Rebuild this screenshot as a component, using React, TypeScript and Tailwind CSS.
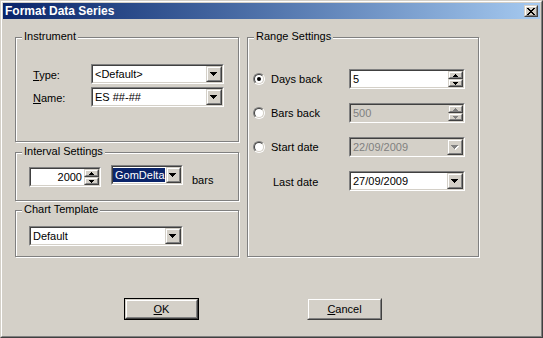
import React from "react";

const Arrow = ({ disabled }: { disabled?: boolean }) => (
  <svg width="8" height="5" viewBox="0 0 8 5" shapeRendering="crispEdges">
    {disabled && (
      <g fill="#ffffff">
        <rect x="1" y="1" width="7" height="1" />
        <rect x="2" y="2" width="5" height="1" />
        <rect x="3" y="3" width="3" height="1" />
        <rect x="4" y="4" width="1" height="1" />
      </g>
    )}
    <g fill={disabled ? "#808080" : "#000000"}>
      <rect x="0" y="0" width="7" height="1" />
      <rect x="1" y="1" width="5" height="1" />
      <rect x="2" y="2" width="3" height="1" />
      <rect x="3" y="3" width="1" height="1" />
    </g>
  </svg>
);

const SmallArrow = ({ up, disabled }: { up?: boolean; disabled?: boolean }) => (
  <svg width="5" height="3" viewBox="0 0 5 3" shapeRendering="crispEdges">
    <g fill={disabled ? "#808080" : "#000000"} transform={up ? "" : "translate(0,3) scale(1,-1)"}>
      <rect x="2" y="0" width="1" height="1" />
      <rect x="1" y="1" width="3" height="1" />
      <rect x="0" y="2" width="5" height="1" />
    </g>
  </svg>
);

const Sunken = ({ className, bg, children }: { className: string; bg: string; children?: React.ReactNode }) => (
  <div className={`border border-t-[#808080] border-l-[#808080] border-r-white border-b-white ${className}`}>
    <div className={`h-full w-full border border-t-[#404040] border-l-[#404040] border-r-[#d4d0c8] border-b-[#d4d0c8] flex items-stretch ${bg}`}>
      {children}
    </div>
  </div>
);

const Raised = ({ className, children }: { className: string; children?: React.ReactNode }) => (
  <div className={`border border-t-[#d4d0c8] border-l-[#d4d0c8] border-r-[#404040] border-b-[#404040] ${className}`}>
    <div className="h-full w-full border border-t-white border-l-white border-r-[#808080] border-b-[#808080] bg-[#d4d0c8] flex items-center justify-center">
      {children}
    </div>
  </div>
);

const Combo = ({
  width,
  text,
  disabled,
  highlight,
}: {
  width: string;
  text: string;
  disabled?: boolean;
  highlight?: boolean;
}) => (
  <Sunken className={`${width} h-[20px]`} bg={disabled ? "bg-[#d4d0c8]" : "bg-white"}>
    {highlight ? (
      <div className="flex-1 py-px pr-px">
        <div className="h-full bg-[#0a246a] text-white pl-[2px] flex items-center leading-[13px]">{text}</div>
      </div>
    ) : (
      <div className={`flex-1 pl-[2px] flex items-center leading-[13px] ${disabled ? "text-[#808080]" : "text-black"}`}>
        {text}
      </div>
    )}
    <Raised className="w-[16px] h-full">
      <Arrow disabled={disabled} />
    </Raised>
  </Sunken>
);

const Spin = ({
  width,
  text,
  disabled,
  right,
}: {
  width: string;
  text: string;
  disabled?: boolean;
  right?: boolean;
}) => (
  <Sunken className={`${width} h-[20px]`} bg={disabled ? "bg-[#d4d0c8]" : "bg-white"}>
    <div
      className={`flex-1 flex items-center leading-[13px] ${right ? "justify-end pr-[2px]" : "pl-[2px]"} ${
        disabled ? "text-[#808080]" : "text-black"
      }`}
    >
      {text}
    </div>
    <div className="w-[15px] h-full flex flex-col">
      <Raised className="w-full h-[8px]">
        <SmallArrow up disabled={disabled} />
      </Raised>
      <Raised className="w-full h-[8px]">
        <SmallArrow disabled={disabled} />
      </Raised>
    </div>
  </Sunken>
);

const Radio = ({ checked }: { checked?: boolean }) => (
  <div className="w-[12px] h-[12px] rounded-full border border-t-[#808080] border-l-[#808080] border-r-white border-b-white">
    <div className="w-full h-full rounded-full border border-t-[#404040] border-l-[#404040] border-r-[#d4d0c8] border-b-[#d4d0c8] bg-white flex items-center justify-center">
      {checked && <div className="w-[4px] h-[4px] rounded-full bg-black" />}
    </div>
  </div>
);

const Group = ({
  className,
  label,
  children,
}: {
  className: string;
  label: string;
  children?: React.ReactNode;
}) => (
  <div
    className={`relative border border-[#808080] shadow-[inset_1px_1px_0_#ffffff,1px_1px_0_#ffffff] ${className}`}
  >
    <div className="absolute left-[6px] top-[-8px] px-[2px] bg-[#d4d0c8] leading-[13px]">{label}</div>
    {children}
  </div>
);

export default function App() {
  return (
    <div className="w-[543px] h-[338px] bg-[#d4d0c8] font-['Liberation_Sans',Arial,sans-serif] text-[11px] text-black border border-t-[#d4d0c8] border-l-[#d4d0c8] border-r-[#404040] border-b-[#404040]">
      <div className="w-full h-full border border-t-white border-l-white border-r-[#808080] border-b-[#808080] p-px flex flex-col">
        {/* Title bar */}
        <div className="h-[16px] flex items-center bg-gradient-to-r from-[#0a246a] to-[#a6caf0] pl-[2px] pr-[2px]">
          <span className="text-white font-bold text-[12px] leading-[14px]">Format Data Series</span>
          <Raised className="ml-auto w-[14px] h-[12px]">
            <svg width="8" height="7" viewBox="0 0 8 7" shapeRendering="crispEdges">
              <g fill="#000">
                <rect x="0" y="0" width="2" height="1" />
                <rect x="6" y="0" width="2" height="1" />
                <rect x="1" y="1" width="2" height="1" />
                <rect x="5" y="1" width="2" height="1" />
                <rect x="2" y="2" width="4" height="1" />
                <rect x="3" y="3" width="2" height="1" />
                <rect x="2" y="4" width="4" height="1" />
                <rect x="1" y="5" width="2" height="1" />
                <rect x="5" y="5" width="2" height="1" />
                <rect x="0" y="6" width="2" height="1" />
                <rect x="6" y="6" width="2" height="1" />
              </g>
            </svg>
          </Raised>
        </div>

        {/* Body */}
        <div className="flex pl-[12px] pt-[18px] gap-[8px]">
          <div className="flex flex-col w-[224px]">
            <Group className="h-[105px] pt-[26px] pl-[17px]" label="Instrument">
              <div className="flex items-center h-[20px]">
                <div className="w-[58px] leading-[13px] pt-[3px]">
                  <span className="underline">T</span>ype:
                </div>
                <Combo width="w-[133px]" text="<Default>" />
              </div>
              <div className="flex items-center h-[20px] mt-[3px]">
                <div className="w-[58px] leading-[13px] pt-[3px]">
                  <span className="underline">N</span>ame:
                </div>
                <Combo width="w-[133px]" text="ES ##-##" />
              </div>
            </Group>
            <Group className="h-[49px] mt-[10px] pt-[12px] pl-[13px]" label="Interval Settings">
              <div className="flex items-start">
                <div className="mt-[2px]">
                  <Spin width="w-[72px]" text="2000" right />
                </div>
                <div className="ml-[10px]">
                  <Combo width="w-[72px]" text="GomDelta" highlight />
                </div>
                <div className="ml-[9px] mt-[9px] leading-[13px]">bars</div>
              </div>
            </Group>
            <Group className="h-[47px] mt-[9px] pt-[15px] pl-[13px]" label="Chart Template">
              <Combo width="w-[154px]" text="Default" />
            </Group>
          </div>

          <Group className="w-[232px] h-[220px] pt-[31px] pl-[5px]" label="Range Settings">
            <div className="flex flex-col gap-[14px]">
              <div className="flex items-center h-[20px]">
                <div className="w-[96px] flex items-center">
                  <Radio checked />
                  <span className="ml-[6px] leading-[13px]">Days back</span>
                </div>
                <Spin width="w-[116px]" text="5" />
              </div>
              <div className="flex items-center h-[20px]">
                <div className="w-[96px] flex items-center">
                  <Radio />
                  <span className="ml-[6px] leading-[13px]">Bars back</span>
                </div>
                <Spin width="w-[116px]" text="500" disabled />
              </div>
              <div className="flex items-center h-[20px]">
                <div className="w-[96px] flex items-center">
                  <Radio />
                  <span className="ml-[6px] leading-[13px]">Start date</span>
                </div>
                <Combo width="w-[116px]" text="22/09/2009" disabled />
              </div>
              <div className="flex items-center h-[20px]">
                <div className="w-[96px] pl-[20px] leading-[13px] pt-[2px]">Last date</div>
                <Combo width="w-[116px]" text="27/09/2009" />
              </div>
            </div>
          </Group>
        </div>

        {/* Buttons */}
        <div className="flex pl-[121px] mt-[41px]">
          <div className="w-[75px] h-[22px] border border-black">
            <Raised className="w-full h-full">
              <span className="leading-[13px]">
                <span className="underline">O</span>K
              </span>
            </Raised>
          </div>
          <Raised className="w-[75px] h-[22px] ml-[108px]">
            <span className="leading-[13px]">
              <span className="underline">C</span>ancel
            </span>
          </Raised>
        </div>
      </div>
    </div>
  );
}
